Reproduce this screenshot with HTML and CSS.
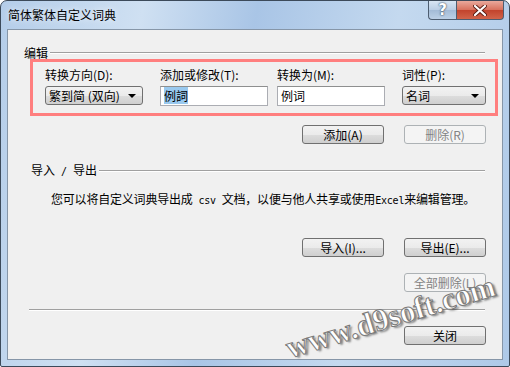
FILE: index.html
```html
<!DOCTYPE html>
<html lang="zh-CN">
<head>
    <meta charset="UTF-8">
    <title>简体繁体自定义词典</title>
    <link rel="stylesheet" href="styles.css">
</head>
<body>
    <div class="window">
        <div class="titlebar">
            <div class="title">简体繁体自定义词典</div>
            <div class="caption-btns">
                <div class="cap-btn help">?</div>
                <div class="cap-btn close">
                    <svg width="14" height="11" viewBox="0 0 14 11">
                        <path d="M2 1 L12 10 M12 1 L2 10" stroke="#5a1e14" stroke-width="4" stroke-linecap="round"/>
                        <path d="M2 1 L12 10 M12 1 L2 10" stroke="#fff" stroke-width="2.2" stroke-linecap="round"/>
                    </svg>
                </div>
            </div>
        </div>
        <div class="client">
            <div class="group-head head-edit">
                <span>编辑</span>
                <div class="rule"></div>
            </div>
            <div class="edit-box">
                <div class="field f-dir">
                    <label>转换方向(D):</label>
                    <div class="combo"><span>繁到简 (双向)</span><i class="arrow"></i></div>
                </div>
                <div class="field f-add">
                    <label>添加或修改(T):</label>
                    <div class="textbox"><span class="sel">例詞</span></div>
                </div>
                <div class="field f-to">
                    <label>转换为(M):</label>
                    <div class="textbox">例词</div>
                </div>
                <div class="field f-pos">
                    <label>词性(P):</label>
                    <div class="combo"><span>名词</span><i class="arrow"></i></div>
                </div>
            </div>
            <div class="btn-row row-add">
                <button class="btn">添加(A)</button>
                <button class="btn" disabled>删除(R)</button>
            </div>

            <div class="group-head head-io">
                <span>导入<span class="mono"> / </span>导出</span>
                <div class="rule"></div>
            </div>
            <p class="desc">您可以将自定义词典导出成<span class="mono"> csv </span>文档，以便与他人共享或使用<span class="mono">Excel</span>来编辑管理。</p>
            <div class="btn-row row-io">
                <button class="btn">导入(I)...</button>
                <button class="btn">导出(E)...</button>
            </div>
            <div class="btn-row row-clear">
                <button class="btn" disabled>全部删除(L)</button>
            </div>
            <div class="rule sep"></div>
            <div class="btn-row row-close">
                <button class="btn">关闭</button>
            </div>
        </div>
        <div class="watermark">www.d9soft.com</div>
    </div>
</body>
</html>
```

FILE: styles.css
```css
body {
    margin: 0;
    background-color: #fff;
    font-family: "Noto Sans CJK SC", "DejaVu Sans", sans-serif;
    font-size: 12px;
    color: #000;
}

.window {
    position: relative;
    box-sizing: border-box;
    width: 510px;
    height: 367px;
    border: 1px solid #3c4a5a;
    border-radius: 7px 7px 2px 2px;
    background: linear-gradient(100deg, #b4cde9 0%, #cfe0f2 25%, #a9c5e6 45%, #c4d9ef 70%, #aec9e8 100%);
    padding: 0 6px 7px 6px;
    overflow: hidden;
}

.titlebar {
    display: flex;
    justify-content: space-between;
    height: 28px;
}

.title {
    padding: 7px 0 0 1px;
    font-size: 12px;
    line-height: 14px;
    color: #000;
    text-shadow: 0 0 6px rgba(255, 255, 255, 0.9);
}

.caption-btns {
    display: flex;
    height: 19px;
    margin-right: -1px;
}

.cap-btn {
    display: flex;
    align-items: center;
    justify-content: center;
    box-sizing: border-box;
    height: 19px;
    border: 1px solid #4d5d70;
    border-top: none;
}

.cap-btn.help {
    width: 28px;
    border-radius: 0 0 0 4px;
    background: linear-gradient(#d8e5f3, #b9cde4 50%, #a3bbd6 51%, #bcd0e6);
    color: #fff;
    font: bold 15px "DejaVu Sans", sans-serif;
    text-shadow: 0 0 2px #33475e, 0 0 1px #33475e;
    border-right: none;
}

.cap-btn.close {
    width: 48px;
    border-radius: 0 0 4px 0;
    background: linear-gradient(#e9a99c, #d7705c 50%, #c2432c 51%, #d1644a);
}

.client {
    box-sizing: border-box;
    height: 331px;
    border: 1px solid #8696a8;
    background-color: #f0f0f0;
    padding: 0 16px 0 0;
}

.mono {
    font-family: "DejaVu Sans Mono", monospace;
    font-size: 10px;
}

.group-head {
    display: flex;
    align-items: center;
    height: 12px;
    line-height: 12px;
}

.group-head .rule {
    flex: 1;
    margin-left: 2px;
}

.rule {
    border-top: 1px solid #a0a0a0;
    border-bottom: 1px solid #fff;
}

.head-edit {
    margin: 17px 1px 0 16px;
}

.head-io {
    margin: 21px 1px 0 23px;
}

.edit-box {
    display: flex;
    margin: 0 -12px 0 22px;
    border: 3px solid #ff7f7f;
    padding: 6px 0 7px 12px;
}

.field {
    display: flex;
    flex-direction: column;
    gap: 4px;
}

.field label {
    height: 14px;
    line-height: 14px;
}

.f-dir { width: 98px; margin-right: 17px; }
.f-add { width: 108px; margin-right: 9px; }
.f-to { width: 108px; margin-right: 17px; }
.f-pos { width: 84px; }

.combo {
    display: flex;
    align-items: center;
    justify-content: space-between;
    box-sizing: border-box;
    height: 19px;
    padding: 0 6px 0 3px;
    border: 1px solid #707070;
    border-radius: 3px;
    background: linear-gradient(#f2f2f2, #ebebeb 50%, #dddddd 51%, #cfcfcf);
    line-height: 17px;
}

.arrow {
    width: 0;
    height: 0;
    border-left: 4px solid transparent;
    border-right: 4px solid transparent;
    border-top: 4px solid #000;
}

.textbox {
    box-sizing: border-box;
    height: 20px;
    padding: 1px 3px;
    border: 1px solid #abadb3;
    border-top-color: #8e8f8f;
    background-color: #fff;
    line-height: 16px;
}

.sel {
    background-color: #99c9ef;
}

.btn-row {
    display: flex;
    justify-content: flex-end;
    gap: 20px;
}

.btn {
    box-sizing: border-box;
    width: 82px;
    height: 19px;
    padding: 0;
    border: 1px solid #707070;
    border-radius: 3px;
    background: linear-gradient(#f2f2f2, #ebebeb 50%, #dddddd 51%, #cfcfcf);
    font-family: inherit;
    font-size: 12px;
    line-height: 16px;
    color: #000;
}

.btn:disabled {
    border-color: #adb2b5;
    background: #f4f4f4;
    color: #838383;
}

.row-add { margin-top: 9px; }

.desc {
    margin: 15px 0 0 43px;
    line-height: 14px;
    letter-spacing: -0.2px;
    white-space: nowrap;
}

.row-io { margin-top: 30px; }
.row-clear { margin-top: 16px; }

.sep {
    margin: 17px 1px 0 21px;
}

.row-close { margin-top: 15px; }

.watermark {
    position: absolute;
    left: 281px;
    top: 303px;
    transform: rotate(-17deg);
    font: bold 31px "Liberation Serif", serif;
    line-height: 26px;
    color: #fff;
    -webkit-text-stroke: 1px #7a7a7a;
    text-shadow: 2px 2px 2px rgba(0, 0, 0, 0.45);
    white-space: nowrap;
}
```
